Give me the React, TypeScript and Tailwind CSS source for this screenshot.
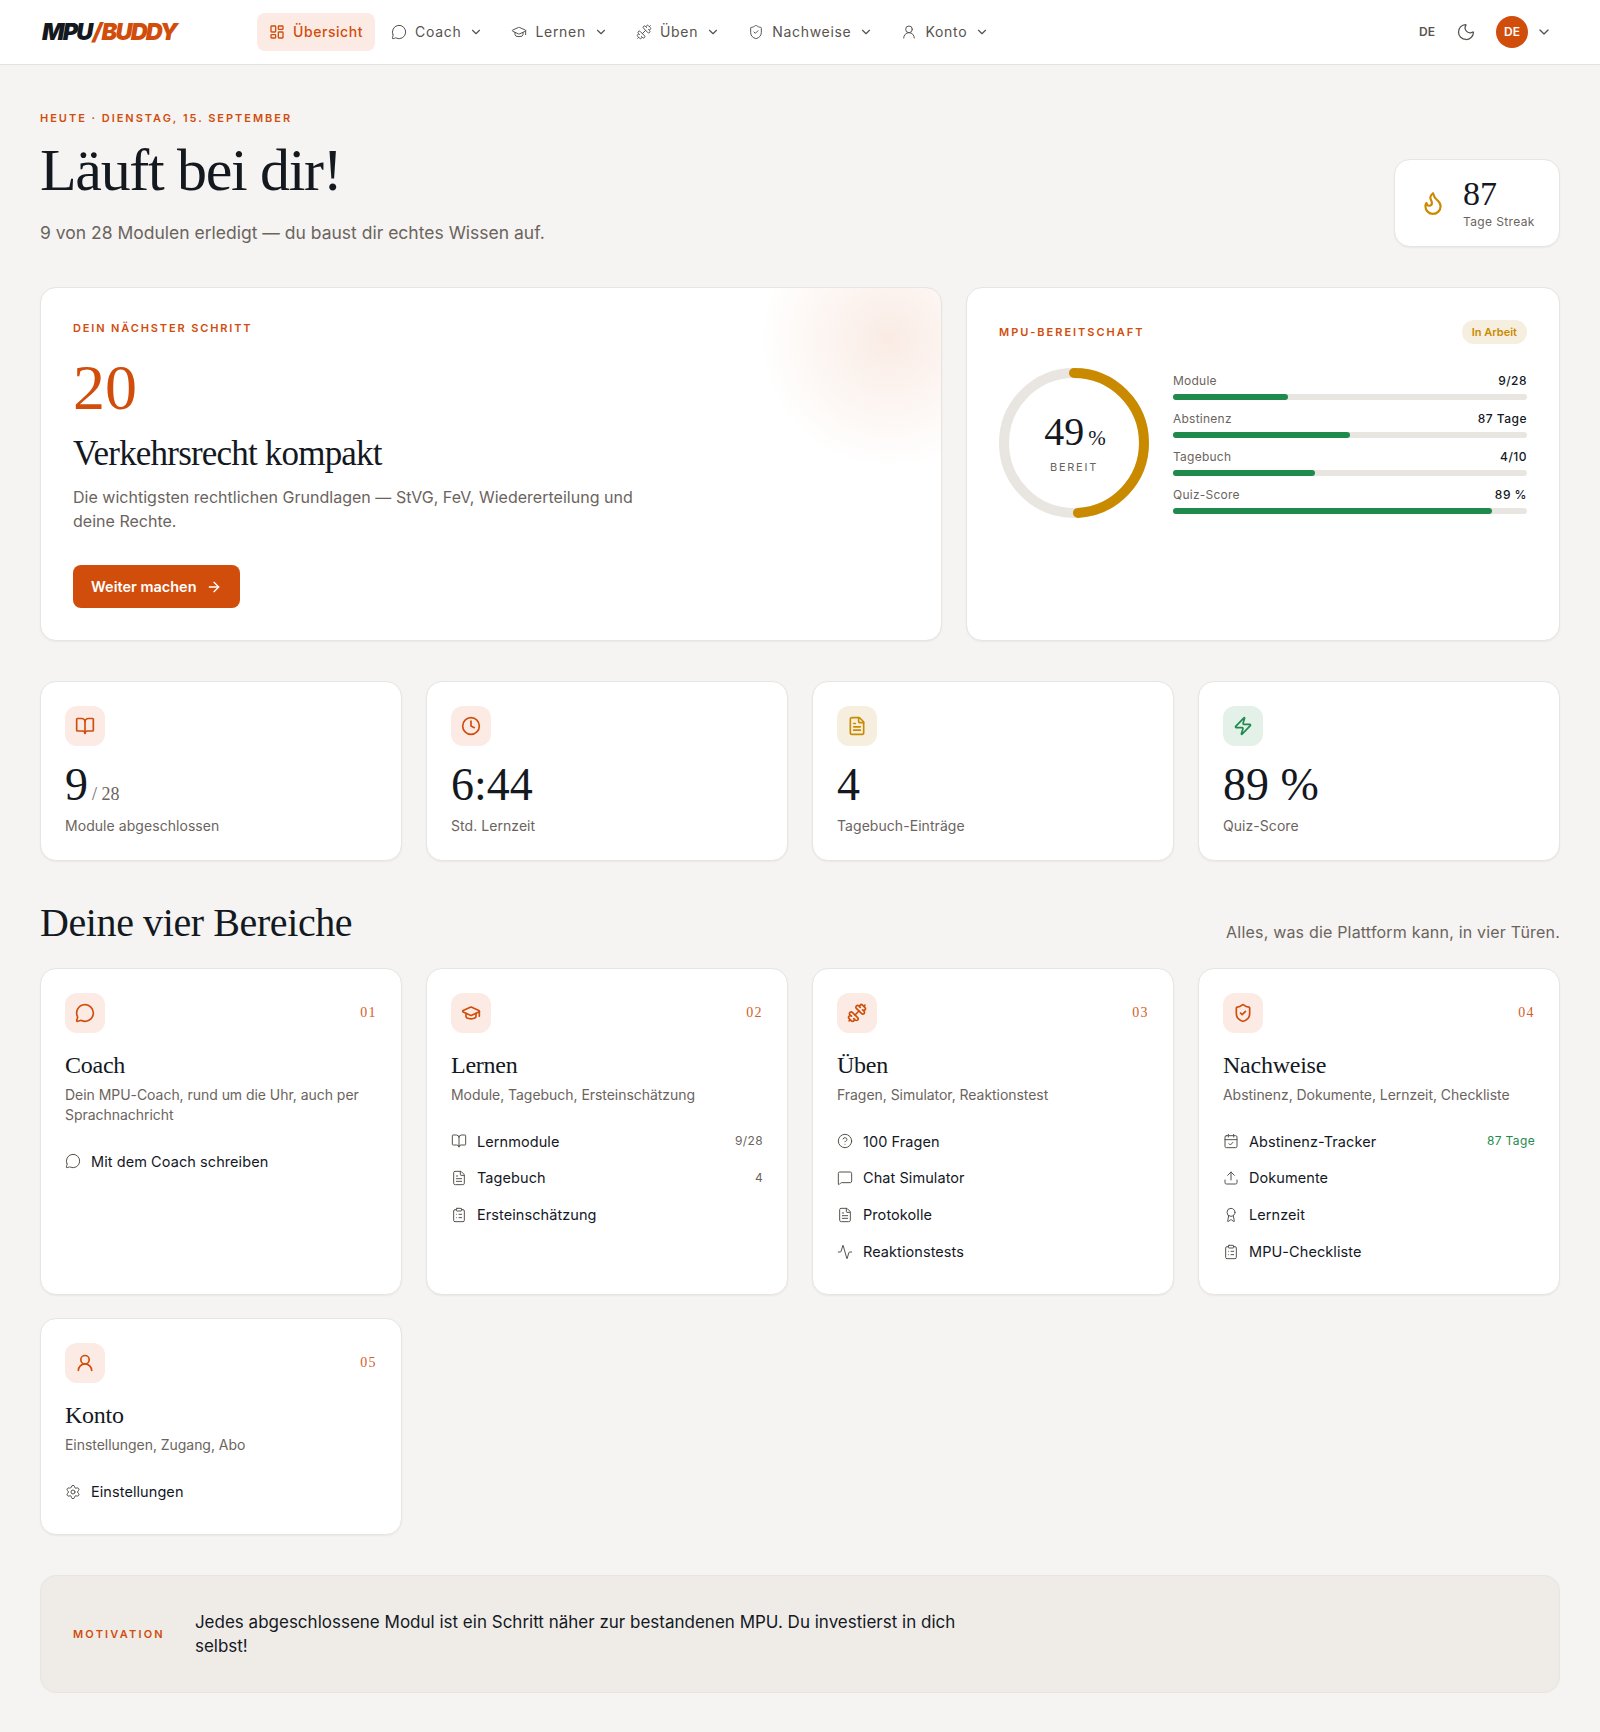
import {
  Activity,
  ArrowRight,
  Award,
  BookOpen,
  CalendarCheck,
  ChevronDown,
  CircleHelp,
  ClipboardList,
  Clock,
  Dumbbell,
  FileText,
  Flame,
  GraduationCap,
  LayoutDashboard,
  MessageCircle,
  MessageSquare,
  Moon,
  Settings,
  ShieldCheck,
  Upload,
  UserRound,
  Zap,
} from 'lucide-react';
import type { ComponentType, ReactNode } from 'react';

type Icon = ComponentType<{ className?: string; strokeWidth?: number }>;

const serif = "font-['Liberation_Serif',serif]";
const cardShadow = 'shadow-[0_1px_2px_rgba(20,24,31,0.05)]';

const navItems: { label: string; icon: Icon }[] = [
  { label: 'Coach', icon: MessageCircle },
  { label: 'Lernen', icon: GraduationCap },
  { label: 'Üben', icon: Dumbbell },
  { label: 'Nachweise', icon: ShieldCheck },
  { label: 'Konto', icon: UserRound },
];

const bars = [
  { label: 'Module', value: '9/28', pct: 32.5 },
  { label: 'Abstinenz', value: '87 Tage', pct: 50 },
  { label: 'Tagebuch', value: '4/10', pct: 40 },
  { label: 'Quiz-Score', value: '89 %', pct: 90 },
];

const stats: { icon: Icon; box: string; value: ReactNode; label: string }[] = [
  {
    icon: BookOpen,
    box: 'bg-[#fbebe4] text-[#d14d0c]',
    value: (
      <>
        9<span className="ml-1 text-lg text-[#6b645e]">/ 28</span>
      </>
    ),
    label: 'Module abgeschlossen',
  },
  { icon: Clock, box: 'bg-[#fbebe4] text-[#d14d0c]', value: '6:44', label: 'Std. Lernzeit' },
  { icon: FileText, box: 'bg-[#f6efdf] text-[#ca8a04]', value: '4', label: 'Tagebuch-Einträge' },
  { icon: Zap, box: 'bg-[#e4f1e8] text-[#1f8a4c]', value: '89 %', label: 'Quiz-Score' },
];

interface AreaLink {
  icon: Icon;
  label: string;
  meta?: string;
  green?: boolean;
}

interface Area {
  no: string;
  icon: Icon;
  title: string;
  text: string;
  links: AreaLink[];
}

const areas: Area[] = [
  {
    no: '01',
    icon: MessageCircle,
    title: 'Coach',
    text: 'Dein MPU-Coach, rund um die Uhr, auch per Sprachnachricht',
    links: [{ icon: MessageCircle, label: 'Mit dem Coach schreiben' }],
  },
  {
    no: '02',
    icon: GraduationCap,
    title: 'Lernen',
    text: 'Module, Tagebuch, Ersteinschätzung',
    links: [
      { icon: BookOpen, label: 'Lernmodule', meta: '9/28' },
      { icon: FileText, label: 'Tagebuch', meta: '4' },
      { icon: ClipboardList, label: 'Ersteinschätzung' },
    ],
  },
  {
    no: '03',
    icon: Dumbbell,
    title: 'Üben',
    text: 'Fragen, Simulator, Reaktionstest',
    links: [
      { icon: CircleHelp, label: '100 Fragen' },
      { icon: MessageSquare, label: 'Chat Simulator' },
      { icon: FileText, label: 'Protokolle' },
      { icon: Activity, label: 'Reaktionstests' },
    ],
  },
  {
    no: '04',
    icon: ShieldCheck,
    title: 'Nachweise',
    text: 'Abstinenz, Dokumente, Lernzeit, Checkliste',
    links: [
      { icon: CalendarCheck, label: 'Abstinenz-Tracker', meta: '87 Tage', green: true },
      { icon: Upload, label: 'Dokumente' },
      { icon: Award, label: 'Lernzeit' },
      { icon: ClipboardList, label: 'MPU-Checkliste' },
    ],
  },
  {
    no: '05',
    icon: UserRound,
    title: 'Konto',
    text: 'Einstellungen, Zugang, Abo',
    links: [{ icon: Settings, label: 'Einstellungen' }],
  },
];

function ReadinessRing({ pct }: { pct: number }) {
  const r = 70;
  const c = 2 * Math.PI * r;
  return (
    <div className="relative h-[150px] w-[150px] shrink-0">
      <svg className="-rotate-90" width="150" height="150" viewBox="0 0 150 150">
        <circle cx="75" cy="75" r={r} fill="none" stroke="#e9e5e1" strokeWidth="10" />
        <circle
          cx="75"
          cy="75"
          r={r}
          fill="none"
          stroke="#c98a00"
          strokeWidth="10"
          strokeLinecap="round"
          strokeDasharray={`${(c * pct) / 100} ${c}`}
        />
      </svg>
      <div className="absolute inset-0 flex flex-col items-center justify-center">
        <div className={`${serif} pl-0.5 text-[40px] leading-none text-[#14181f]`}>
          49<span className="ml-1 text-[21px]">%</span>
        </div>
        <div className="mt-[7px] text-[11px] leading-4 tracking-[0.16em] text-[#6b645e]">BEREIT</div>
      </div>
    </div>
  );
}

function AreaCard({ area }: { area: Area }) {
  const AreaIcon = area.icon;
  return (
    <div className={`rounded-2xl border border-[#e8e5e1] bg-white p-6 ${cardShadow}`}>
      <div className="flex items-start justify-between">
        <div className="flex h-10 w-10 items-center justify-center rounded-xl bg-[#fbebe4] text-[#d14d0c]">
          <AreaIcon className="h-5 w-5" />
        </div>
        <span className={`${serif} mt-2.5 text-sm leading-5 tracking-widest text-[#d14d0c] opacity-90`}>{area.no}</span>
      </div>
      <h3 className={`${serif} mt-4 text-2xl leading-8 tracking-[-0.01em] text-[#14181f]`}>{area.title}</h3>
      <p className="mt-1 text-sm leading-5 tracking-[-0.003em] text-[#6b645e]">{area.text}</p>
      <ul className="mt-[18px] flex flex-col">
        {area.links.map((link) => {
          const LinkIcon = link.icon;
          return (
            <li key={link.label} className="flex h-[36.8px] items-center gap-2.5 text-[14.5px] tracking-[0.005em] text-[#14181f]">
              <LinkIcon className="h-4 w-4 shrink-0 text-[#57534e]" strokeWidth={1.5} />
              <span className="flex-1">{link.label}</span>
              {link.meta && (
                <span className={`text-xs tracking-[0.03em] ${link.green ? 'text-[#1f8a4c]' : 'text-[#6b645e]'}`}>
                  {link.meta}
                </span>
              )}
            </li>
          );
        })}
      </ul>
    </div>
  );
}

export default function App() {
  return (
    <div className="min-h-[1732px] bg-[#f5f4f2] font-['Inter',sans-serif] text-[#14181f]">
      <header className="flex h-[65px] items-center border-b border-[#e5e3df] bg-white pl-[42px] pr-[48px]">
        <div className="w-[215px] text-[23.5px] font-black italic tracking-[-0.075em]">
          MPU<span className="mx-px text-[#d14d0c]">/</span>
          <span className="text-[#d14d0c]">BUDDY</span>
        </div>
        <nav className="flex items-center gap-1 text-sm tracking-[0.05em] text-[#57534e]">
          <a className="flex h-[38px] items-center gap-2 rounded-lg bg-[#fbebe4] px-3 font-medium tracking-[0.04em] text-[#d14d0c]">
            <LayoutDashboard className="h-4 w-4" />
            Übersicht
          </a>
          {navItems.map((item) => {
            const NavIcon = item.icon;
            return (
              <a key={item.label} className="flex h-[38px] items-center gap-2 px-3">
                <NavIcon className="h-4 w-4" strokeWidth={1.5} />
                {item.label}
                <ChevronDown className="h-3.5 w-3.5" />
              </a>
            );
          })}
        </nav>
        <div className="ml-auto flex items-center">
          <span className="text-xs font-semibold text-[#57534e]">DE</span>
          <Moon className="ml-[21px] h-5 w-5 text-[#57534e]" strokeWidth={1.5} />
          <div className="ml-5 flex h-8 w-8 items-center justify-center rounded-full bg-[#d14d0c] text-xs font-semibold text-white">
            DE
          </div>
          <ChevronDown className="ml-2 h-4 w-4 text-[#57534e]" />
        </div>
      </header>

      <main className="px-10 pb-10 pt-[45px]">
        <section className="flex items-end justify-between">
          <div>
            <div className="text-[11px] font-semibold leading-4 tracking-[0.18em] text-[#d14d0c]">
              HEUTE · DIENSTAG, 15. SEPTEMBER
            </div>
            <h1 className={`${serif} mt-[14px] text-[60px] leading-[60px] tracking-[-0.022em] text-[#14181f]`}>
              Läuft bei dir!
            </h1>
            <p className="mt-[19px] text-[17.5px] leading-7 text-[#6b645e]">
              9 von 28 Modulen erledigt — du baust dir echtes Wissen auf.
            </p>
          </div>
          <div className={`flex h-[88px] w-[166px] items-center gap-[17px] rounded-2xl border border-[#e8e5e1] bg-white pl-[25px] ${cardShadow}`}>
            <Flame className="h-[26px] w-[26px] text-[#c98a00]" />
            <div>
              <div className={`${serif} text-[34px] leading-9 text-[#14181f]`}>87</div>
              <div className="mt-0.5 text-xs leading-4 tracking-[0.03em] text-[#6b645e]">Tage Streak</div>
            </div>
          </div>
        </section>

        <section className="mt-10 grid grid-cols-[1fr_594px] gap-6">
          <div className={`relative h-[354px] overflow-hidden rounded-2xl border border-[#e8e5e1] bg-white px-8 pt-8 ${cardShadow}`}>
            <div className="absolute -right-[78px] -top-[79px] h-[260px] w-[260px] rounded-full bg-[radial-gradient(circle,rgba(209,77,12,0.11),transparent_70%)]" />
            <div className="text-[11px] font-semibold leading-4 tracking-[0.17em] text-[#d14d0c]">
              DEIN NÄCHSTER SCHRITT
            </div>
            <div className={`${serif} mt-5 text-[64px] leading-[64px] text-[#d14d0c]`}>20</div>
            <h2 className={`${serif} mt-[14px] text-[35px] leading-10 tracking-[-0.023em] text-[#14181f]`}>
              Verkehrsrecht kompakt
            </h2>
            <p className="mt-[11px] max-w-xl text-base leading-6 tracking-[0.001em] text-[#6b645e]">
              Die wichtigsten rechtlichen Grundlagen — StVG, FeV, Wiedererteilung und deine Rechte.
            </p>
            <a className="mt-8 inline-flex h-[43px] items-center gap-[9px] rounded-lg bg-[#d14d0c] px-[18px] text-[14.5px] font-semibold text-white">
              Weiter machen
              <ArrowRight className="h-4 w-4" />
            </a>
          </div>

          <div className={`rounded-2xl border border-[#e8e5e1] bg-white px-8 pt-8 ${cardShadow}`}>
            <div className="flex items-center justify-between">
              <span className="text-[11px] font-semibold tracking-[0.18em] text-[#d14d0c]">MPU-BEREITSCHAFT</span>
              <span className="rounded-full bg-[#f6efdf] px-2.5 py-1 text-[11px] font-semibold leading-4 text-[#c98a00]">
                In Arbeit
              </span>
            </div>
            <div className="mt-6 flex items-start gap-6">
              <ReadinessRing pct={49} />
              <div className="mt-[5px] flex flex-1 flex-col gap-[11px]">
                {bars.map((bar) => (
                  <div key={bar.label}>
                    <div className="flex items-center justify-between text-xs leading-4 tracking-[0.02em]">
                      <span className="text-[#6b645e]">{bar.label}</span>
                      <span className="font-medium tracking-[0.04em] text-[#14181f]">{bar.value}</span>
                    </div>
                    <div className="mt-[5px] h-1.5 rounded-full bg-[#e9e5e1]">
                      <div className="h-1.5 rounded-full bg-[#1f8a4c]" style={{ width: `${bar.pct}%` }} />
                    </div>
                  </div>
                ))}
              </div>
            </div>
          </div>
        </section>

        <section className="mt-10 grid grid-cols-4 gap-6">
          {stats.map((stat) => {
            const StatIcon = stat.icon;
            return (
              <div key={stat.label} className={`h-[180px] rounded-2xl border border-[#e8e5e1] bg-white p-6 ${cardShadow}`}>
                <div className={`flex h-10 w-10 items-center justify-center rounded-xl ${stat.box}`}>
                  <StatIcon className="h-5 w-5" />
                </div>
                <div className={`${serif} mt-[15px] text-[46px] leading-[48px] text-[#14181f]`}>{stat.value}</div>
                <div className="mt-[7px] text-sm leading-5 tracking-[0.004em] text-[#6b645e]">{stat.label}</div>
              </div>
            );
          })}
        </section>

        <section className="mt-10 flex items-end justify-between">
          <h2 className={`${serif} text-[40px] leading-[44px] tracking-[-0.01em] text-[#14181f]`}>Deine vier Bereiche</h2>
          <p className="pb-px text-base leading-6 tracking-[0.012em] text-[#6b645e]">Alles, was die Plattform kann, in vier Türen.</p>
        </section>

        <section className="mt-[23px] grid grid-cols-4 gap-x-6 gap-y-[23px]">
          {areas.map((area) => (
            <AreaCard key={area.no} area={area} />
          ))}
        </section>

        <section className="mt-10 flex h-[118px] items-center gap-[30px] rounded-2xl border border-[#e8e5e1] bg-[#efece8] px-8">
          <span className="text-[11px] font-semibold tracking-[0.2em] text-[#d14d0c]">MOTIVATION</span>
          <p className="max-w-3xl text-[17px] leading-6 text-[#14181f]">
            Jedes abgeschlossene Modul ist ein Schritt näher zur bestandenen MPU. Du investierst in dich selbst!
          </p>
        </section>
      </main>
    </div>
  );
}
